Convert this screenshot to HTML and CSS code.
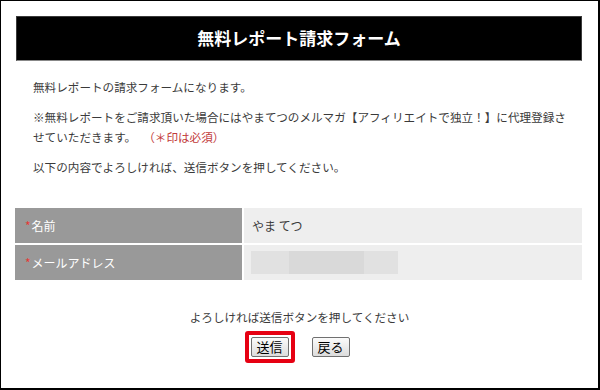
FILE: index.html
```html
<!DOCTYPE html>
<html lang="ja">
<head>
<meta charset="utf-8">
<title>無料レポート請求フォーム</title>
<link rel="stylesheet" href="styles.css">
</head>
<body>
<div class="frame">
  <h1 class="title">無料レポート請求フォーム</h1>
  <div class="intro">
    <p>無料レポートの請求フォームになります。</p>
    <p>※無料レポートをご請求頂いた場合にはやまてつのメルマガ【アフィリエイトで独立！】に代理登録させていただきます。<span class="req">（＊印は必須）</span></p>
    <p>以下の内容でよろしければ、送信ボタンを押してください。</p>
  </div>
  <div class="form">
    <div class="label"><span class="star">*</span>名前</div>
    <div class="value">やま てつ</div>
    <div class="label"><span class="star">*</span>メールアドレス</div>
    <div class="value"><span class="blur"></span></div>
  </div>
  <p class="confirm">よろしければ送信ボタンを押してください</p>
  <div class="actions">
    <span class="highlight"><button class="btn">送信</button></span>
    <button class="btn">戻る</button>
  </div>
</div>
</body>
</html>
```
FILE: styles.css
```css
html, body {
  margin: 0;
  padding: 0;
  background: #fff;
}
body {
  font-family: "Noto Sans CJK JP", "Noto Sans", sans-serif;
  color: #3a3a3a;
}
.frame {
  box-sizing: border-box;
  width: 600px;
  height: 390px;
  border: 1px solid #000;
  border-right-width: 2px;
  border-bottom-width: 2px;
  overflow: hidden;
}
.title {
  box-sizing: border-box;
  margin: 15px 16px 0 15px;
  height: 45px;
  background: #000;
  border: 1px solid #3a3a3a;
  border-bottom-color: #888;
  color: #fff;
  font-size: 17px;
  font-weight: bold;
  line-height: 42px;
  text-align: center;
}
.intro {
  padding: 16px 24px 0 32px;
  font-size: 11.6px;
  line-height: 20px;
}
.intro p {
  margin: 0 0 10px;
}
.intro p:last-child {
  margin-bottom: 0;
}
.req {
  display: inline-block;
  margin-left: 7px;
  color: #c23a3a;
}
.form {
  margin: 31px 16px 0 14px;
  display: grid;
  grid-template-columns: 227px 1fr;
  grid-auto-rows: 35px;
  gap: 2px;
  font-size: 12px;
}
.label {
  background: #999;
  color: #fff;
  display: flex;
  align-items: center;
  padding-left: 10px;
}
.star {
  color: #e53935;
  margin-right: 1px;
}
.value {
  background: #eee;
  display: flex;
  align-items: center;
  padding-left: 8px;
}
.blur {
  display: block;
  width: 147px;
  height: 23px;
  margin-left: -1px;
  background: linear-gradient(90deg, #e1e1e1 0, #e1e1e1 38px, #d9d9d9 38px, #d9d9d9 113px, #e1e1e1 113px);
}
.confirm {
  margin: 27px 0 0;
  font-size: 11.6px;
  line-height: 20px;
  text-align: center;
}
.actions {
  margin-top: 4px;
  display: flex;
  justify-content: center;
  align-items: center;
  gap: 17px;
  padding-right: 5px;
}
.highlight {
  display: flex;
  align-items: center;
  justify-content: center;
  box-sizing: border-box;
  width: 50px;
  height: 32px;
  border: 4px solid #e60012;
  border-radius: 3px;
}
.btn {
  box-sizing: border-box;
  width: 38px;
  height: 20px;
  padding: 0;
  font-family: "Noto Sans CJK JP", sans-serif;
  font-size: 13px;
  line-height: 18px;
  color: #000;
  background: linear-gradient(#fbfbfb, #dcdcdc);
  border: 1px solid #707070;
  border-radius: 2px;
}
```
